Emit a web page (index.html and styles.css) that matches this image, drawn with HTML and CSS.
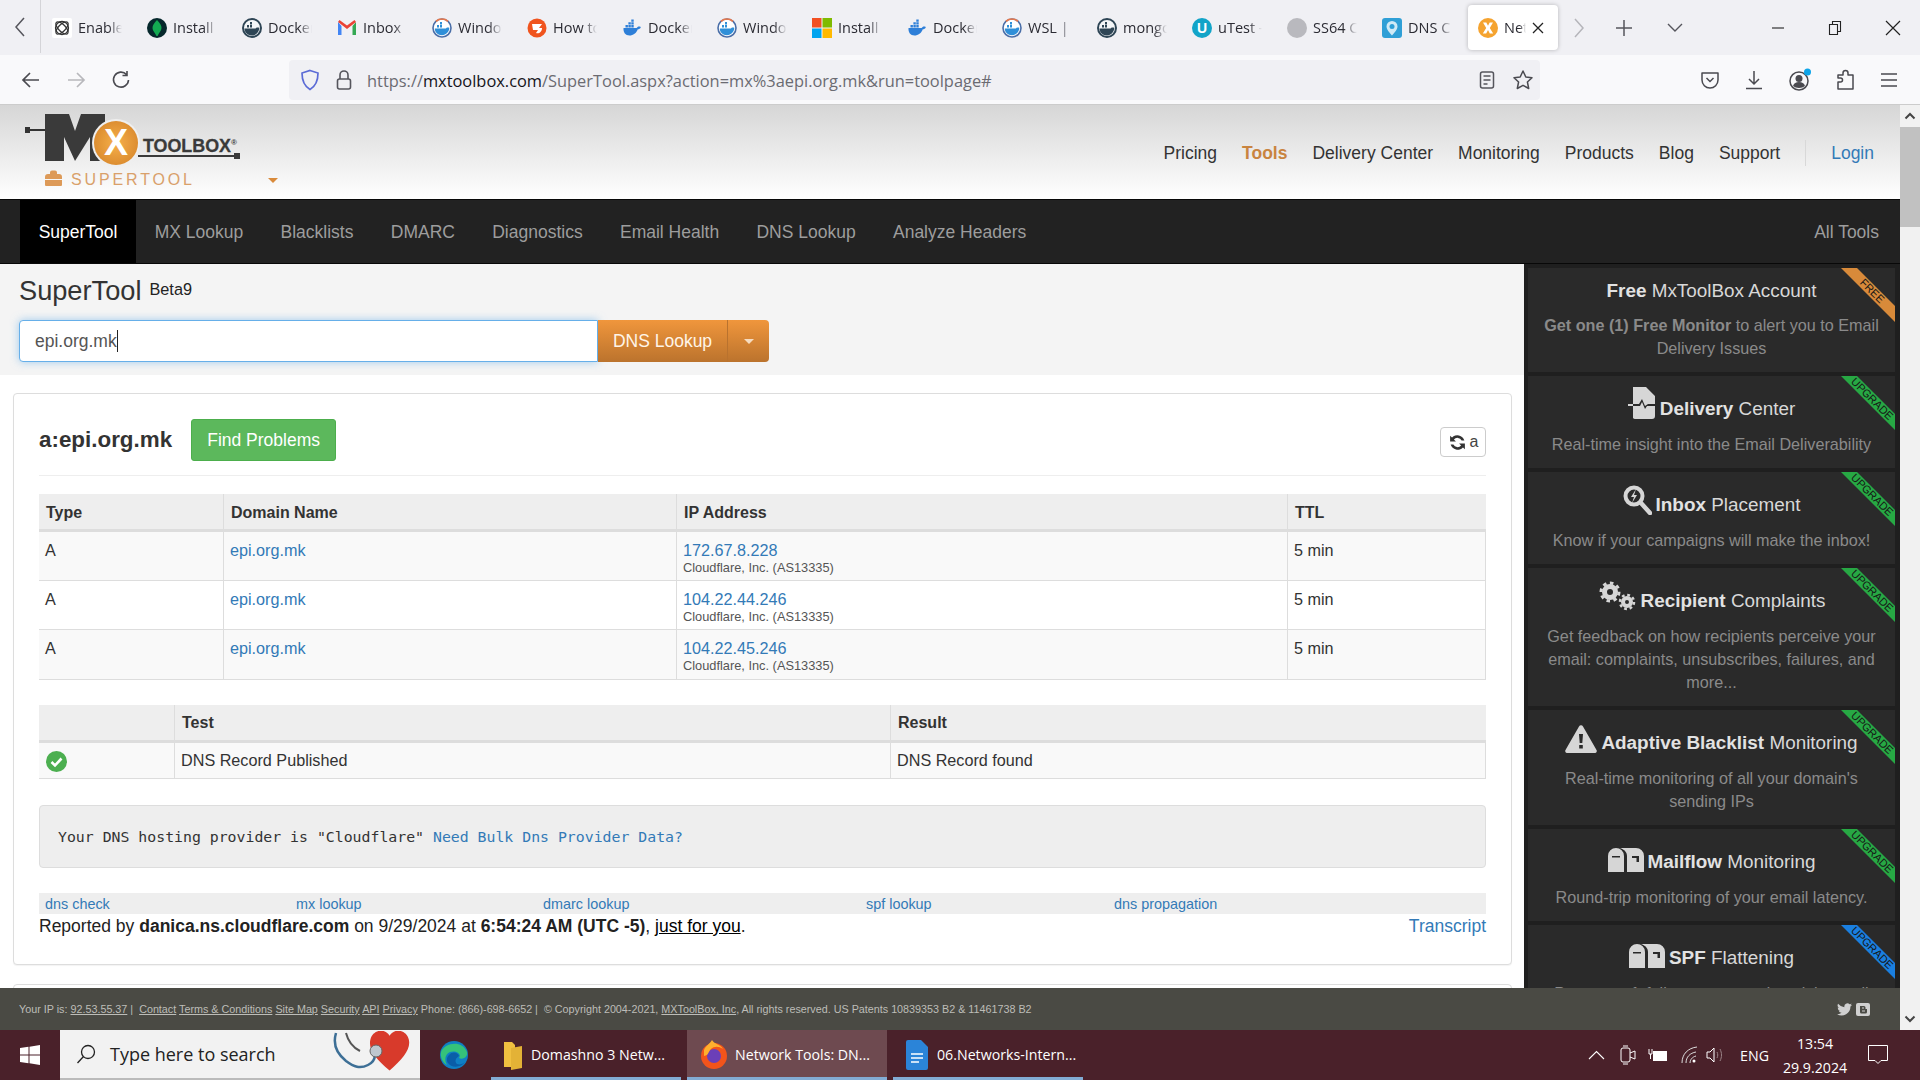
FILE: index.html
```html
<!DOCTYPE html>
<html lang="en">
<head>
<meta charset="utf-8">
<title>Network Tools: DNS Lookup</title>
<link rel="stylesheet" href="styles.css">
</head>
<body>
<svg class="defs" width="0" height="0" aria-hidden="true">
  <symbol id="whale" viewBox="0 0 20 20">
    <path fill="currentColor" d="M1.500 10h13.200c.5-1.200 1.800-1.800 3.300-1.400.4.200.3.500.8.600-.5 1.500-1.800 2-3 2-1.200 3.800-4.800 6.300-8.300 6.300-4 0-6.400-3-6-7.500z"/>
    <path fill="currentColor" d="M3.500 7h2.400v2.400H3.500zM6.400 7h2.400v2.400H6.400zM9.300 7h2.400v2.400H9.300zM6.400 4.200h2.400v2.400H6.400zM9.300 4.200h2.400v2.400H9.300zM9.300 1.400h2.400v2.400H9.300z"/>
  </symbol>
  <symbol id="dockring" viewBox="0 0 20 20">
    <circle cx="10" cy="10" r="9" fill="#f4f6f8" stroke="#2e4555" stroke-width="2"/>
    <path fill="#2e4555" d="M2.500 10.500h11c.6-1 2-1.500 3.800-.7 0 3.700-3 7.700-7.300 7.700-4.300 0-7.500-3.200-7.500-7z"/>
    <path fill="#2e4555" d="M5 7h2v2.500H5zM8 7h2v2.500H8zM8 4h2v2.500H8z"/>
  </symbol>
  <symbol id="winring" viewBox="0 0 20 20">
    <circle cx="10" cy="10" r="9" fill="#fff" stroke="#4a6ea8" stroke-width="1.600"/>
    <path fill="none" stroke="#e8774a" stroke-width="1.600" d="M4 3.300A9 9 0 0 1 16 3.300"/>
    <path fill="#2f8fd8" d="M2.800 10.500h11c.6-1 2-1.500 3.500-.7 0 3.700-3 7.400-7.300 7.400-4.300 0-7.200-2.900-7.200-6.700z"/>
    <path fill="#2f8fd8" d="M5 7h2v2.500H5zM8 7h2v2.500H8zM8 4h2v2.500H8z"/>
  </symbol>
  <symbol id="mailbox" viewBox="0 0 36 24">
    <path fill="#d6d6d6" d="M0 24V8a8 8 0 0 1 16 0v16zM12 0h16a8 8 0 0 1 8 8v16H19V8c0-3-1.500-6-7-8z"/>
    <path fill="#2a2a2a" d="M4 8h8v1.500H4zM24 8h7v6h-2.500V10H24z"/>
  </symbol>
</svg>

<div class="app">
  <div class="tabstrip">
    <div class="tab-back"><svg width="12" height="22" viewBox="0 0 12 22"><path d="M10 2 2 11l8 9" fill="none" stroke="#55555c" stroke-width="1.500"/></svg></div>
    <div class="tab"><svg class="fav" viewBox="0 0 20 20"><rect width="20" height="20" rx="2" fill="#fff"/><g fill="none" stroke="#333" stroke-width="1.300"><circle cx="10" cy="10" r="6.500"/><ellipse cx="10" cy="10" rx="8" ry="3.500" transform="rotate(45 10 10)"/><ellipse cx="10" cy="10" rx="8" ry="3.500" transform="rotate(-45 10 10)"/></g></svg><span class="tab-text">Enable</span></div>
    <div class="tab"><svg class="fav" viewBox="0 0 20 20"><circle cx="10" cy="10" r="10" fill="#06282c"/><path d="M10 2c3 3 4.500 5.500 4.500 8S12 15 10.500 18h-1C8 15 5.500 12.500 5.500 10S7 5 10 2z" fill="#13aa52"/></svg><span class="tab-text">Install</span></div>
    <div class="tab"><svg class="fav"><use href="#dockring"/></svg><span class="tab-text">Docker</span></div>
    <div class="tab"><svg class="fav" viewBox="0 0 20 20"><path d="M1 4v13h3.500V8z" fill="#4285f4"/><path d="M15.500 8v9H19V4z" fill="#34a853"/><path d="M1 4l9 7 9-7-1.500-2L10 7.500 2.500 2z" fill="#ea4335"/></svg><span class="tab-text">Inbox</span></div>
    <div class="tab"><svg class="fav"><use href="#winring"/></svg><span class="tab-text">Windows</span></div>
    <div class="tab"><svg class="fav" viewBox="0 0 20 20"><circle cx="10" cy="10" r="9.500" fill="#f0541e"/><path d="M5 6h10l-3 4h3c0 4-3 6-6 5l2-3H6z" fill="#fff"/></svg><span class="tab-text">How to</span></div>
    <div class="tab"><svg class="fav blue"><use href="#whale"/></svg><span class="tab-text">Docker</span></div>
    <div class="tab"><svg class="fav"><use href="#winring"/></svg><span class="tab-text">Windows</span></div>
    <div class="tab"><svg class="fav" viewBox="0 0 20 20"><rect width="9.500" height="9.500" fill="#f25022"/><rect x="10.500" width="9.500" height="9.500" fill="#7fba00"/><rect y="10.500" width="9.500" height="9.500" fill="#00a4ef"/><rect x="10.500" y="10.500" width="9.500" height="9.500" fill="#ffb900"/></svg><span class="tab-text">Install</span></div>
    <div class="tab"><svg class="fav blue"><use href="#whale"/></svg><span class="tab-text">Docker</span></div>
    <div class="tab"><svg class="fav"><use href="#winring"/></svg><span class="tab-text">WSL |</span></div>
    <div class="tab"><svg class="fav"><use href="#dockring"/></svg><span class="tab-text">mongo</span></div>
    <div class="tab"><svg class="fav" viewBox="0 0 20 20"><circle cx="10" cy="10" r="10" fill="#12a4c8"/><text x="10" y="15" text-anchor="middle" font-size="14" font-weight="700" font-family="Liberation Sans" fill="#fff">U</text></svg><span class="tab-text">uTest -</span></div>
    <div class="tab"><svg class="fav" viewBox="0 0 20 20"><circle cx="10" cy="10" r="10" fill="#b9b9be"/></svg><span class="tab-text">SS64 C</span></div>
    <div class="tab"><svg class="fav" viewBox="0 0 20 20"><rect width="20" height="20" rx="3" fill="#2f9fd6"/><path d="M10 3a5.500 5.500 0 0 1 5.500 5.500C15.500 12 10 17.500 10 17.500S4.500 12 4.500 8.500A5.500 5.500 0 0 1 10 3z" fill="#cfeaf6"/><circle cx="10" cy="8.500" r="2.500" fill="#2f9fd6"/></svg><span class="tab-text">DNS C</span></div>
    <div class="tab tab-active"><svg class="fav" viewBox="0 0 20 20"><circle cx="10" cy="10" r="10" fill="#f5a32f"/><path d="M5 4.500h3.300L10 7.800l1.700-3.300H15L11.800 10l3.400 5.500h-3.400L10 12.100l-1.800 3.400H4.800L8.200 10z" fill="#fff"/></svg><span class="tab-text tab-text-short">Network</span><svg class="tab-close" width="12" height="12" viewBox="0 0 12 12"><path d="M1 1l10 10M11 1 1 11" stroke="#222" stroke-width="1.300"/></svg></div>
    <div class="tab-next"><svg width="12" height="22" viewBox="0 0 12 22"><path d="M2 2l8 9-8 9" fill="none" stroke="#b5b5ba" stroke-width="1.500"/></svg></div>
    <div class="tab-plus"><svg width="18" height="18" viewBox="0 0 18 18"><path d="M9 1v16M1 9h16" stroke="#55555c" stroke-width="1.500"/></svg></div>
    <div class="tab-list"><svg width="16" height="10" viewBox="0 0 16 10"><path d="M1 1l7 7 7-7" fill="none" stroke="#55555c" stroke-width="1.400"/></svg></div>
    <div class="win-controls">
      <svg width="14" height="14" viewBox="0 0 14 14"><path d="M1 7h12" stroke="#222" stroke-width="1.100"/></svg>
      <svg width="14" height="16" viewBox="0 0 14 16"><path d="M1.500 4.500h8v10h-8zM4.500 4.500V1.500h8v10h-3" fill="none" stroke="#222" stroke-width="1.100"/></svg>
      <svg width="16" height="16" viewBox="0 0 16 16"><path d="M1 1l14 14M15 1 1 15" stroke="#222" stroke-width="1.200"/></svg>
    </div>
  </div>

  <div class="toolbar">
    <button class="tb-btn tb-first"><svg width="20" height="18" viewBox="0 0 20 18"><path d="M18 9H3M9 2 2 9l7 7" fill="none" stroke="#4a4a50" stroke-width="1.700"/></svg></button>
    <button class="tb-btn"><svg width="20" height="18" viewBox="0 0 20 18"><path d="M2 9h15M11 2l7 7-7 7" fill="none" stroke="#b8b8bc" stroke-width="1.700"/></svg></button>
    <button class="tb-btn"><svg width="20" height="20" viewBox="0 0 20 20"><path d="M15.500 4.500A7.500 7.500 0 1 0 17.500 10M16 1v4.500h-4.500" fill="none" stroke="#4a4a50" stroke-width="1.600"/></svg></button>
    <div class="urlbar">
      <svg class="url-shield" width="20" height="22" viewBox="0 0 20 22"><path d="M10 1.500 18 4c0 8-2 13-8 16.500C4 17 2 12 2 4z" fill="none" stroke="#5b6bd6" stroke-width="1.700"/></svg>
      <svg class="url-lock" width="18" height="22" viewBox="0 0 18 22"><path d="M5 10V6a4 4 0 0 1 8 0v4" fill="none" stroke="#55555c" stroke-width="1.600"/><rect x="2.500" y="10" width="13" height="10" rx="2" fill="none" stroke="#55555c" stroke-width="1.600"/></svg>
      <span class="url-text">https://<span class="url-host">mxtoolbox.com</span>/SuperTool.aspx?action=mx%3aepi.org.mk&amp;run=toolpage#</span>
      <svg class="url-reader" width="16" height="18" viewBox="0 0 16 18"><rect x="1.500" y="1" width="13" height="16" rx="2" fill="none" stroke="#55555c" stroke-width="1.500"/><path d="M4.500 5h7M4.500 9h7M4.500 13h4" stroke="#55555c" stroke-width="1.500"/></svg>
      <svg class="url-star" width="22" height="22" viewBox="0 0 22 22"><path d="m11 2 2.800 6 6.200.7-4.600 4.300 1.300 6.500L11 16.300 5.300 19.500 6.600 13 2 8.700 8.200 8z" fill="none" stroke="#4a4a50" stroke-width="1.500" stroke-linejoin="round"/></svg>
    </div>
    <div class="tb-right">
      <svg width="20" height="20" viewBox="0 0 20 20"><path d="M2 3h16v7a8 8 0 0 1-16 0z" fill="none" stroke="#4a4a50" stroke-width="1.500" stroke-linejoin="round"/><path d="m6.500 8 3.500 3.500L13.500 8" fill="none" stroke="#4a4a50" stroke-width="1.500"/></svg>
      <svg width="20" height="20" viewBox="0 0 20 20"><path d="M10 1v13M5 9l5 5 5-5M2 18.500h16" fill="none" stroke="#4a4a50" stroke-width="1.500"/></svg>
      <svg width="24" height="24" viewBox="0 0 24 24"><circle cx="11" cy="13" r="9" fill="none" stroke="#4a4a50" stroke-width="1.500"/><circle cx="11" cy="10.500" r="3.500" fill="#4a4a50"/><path d="M5 18c1-3 3-4 6-4s5 1 6 4c-3 2.500-9 2.500-12 0z" fill="#4a4a50"/><circle cx="19.500" cy="4" r="3.500" fill="#0ea5e9"/></svg>
      <svg width="20" height="22" viewBox="0 0 20 22"><path d="M2 20v-7h2.500a2 2 0 0 0 0-4H2V6h5V4a2.500 2.500 0 0 1 5 0v2h5v14z" fill="none" stroke="#4a4a50" stroke-width="1.500" stroke-linejoin="round"/></svg>
      <svg width="18" height="16" viewBox="0 0 18 16"><path d="M1 2h16M1 8h16M1 14h16" stroke="#4a4a50" stroke-width="1.500"/></svg>
    </div>
  </div>

  <div class="viewport">
    <div class="page">
      <header class="site-header">
        <svg class="logo" width="270" height="94" viewBox="0 0 270 94">
          <defs><radialGradient id="orb" cx="50%" cy="50%" r="55%"><stop offset="0" stop-color="#f6b04a"/><stop offset="1" stop-color="#da8a2e"/></radialGradient></defs>
          <rect x="5" y="22" width="5" height="6" fill="#333"/><rect x="10" y="24" width="16" height="2" fill="#333"/>
          <polygon points="25,9 49,9 55,26 61,9 85,9 85,56 70,56 70,32 55,56 44,32 44,56 25,56" fill="#3a3a3a"/>
          <circle cx="96" cy="38" r="24" fill="#efefef"/><circle cx="96" cy="38" r="22" fill="url(#orb)"/>
          <text x="96" y="50" text-anchor="middle" font-family="Liberation Sans" font-weight="700" font-size="36" fill="#fff">X</text>
          <text x="123" y="47" font-family="Liberation Sans" font-weight="700" font-size="18" stroke="#3a3a3a" stroke-width=".3" fill="#3a3a3a" textLength="88" lengthAdjust="spacingAndGlyphs">TOOLBOX</text>
          <text x="211" y="40" font-family="Liberation Sans" font-weight="700" font-size="8" fill="#3a3a3a">®</text>
          <rect x="118" y="50" width="97" height="2" fill="#3a3a3a"/><rect x="214" y="48" width="6" height="6" fill="#3a3a3a"/>
          <path d="M25 72a3 3 0 0 1 3-3h2v-1.500a2 2 0 0 1 2-2h3a2 2 0 0 1 2 2V69h2a3 3 0 0 1 3 3v2H25zM25 75h17v5a1 1 0 0 1-1 1H26a1 1 0 0 1-1-1z" fill="#dd9a58"/>
          <text x="51" y="80" font-family="Liberation Sans" font-size="16" fill="#d9a06a" textLength="121">SUPERTOOL</text>
          <path d="M248 73h10l-5 5z" fill="#d98a3a"/>
        </svg>
        <nav class="top-nav">
          <a>Pricing</a><a class="nav-current">Tools</a><a>Delivery Center</a><a>Monitoring</a><a>Products</a><a>Blog</a><a>Support</a>
          <span class="nav-sep"></span>
          <a class="nav-login">Login</a>
        </nav>
      </header>

      <nav class="tool-nav">
        <a class="tool-active">SuperTool</a><a>MX Lookup</a><a>Blacklists</a><a>DMARC</a><a>Diagnostics</a><a>Email Health</a><a>DNS Lookup</a><a>Analyze Headers</a>
        <a class="tool-all">All Tools</a>
      </nav>

      <div class="main">
        <div class="content">
          <section class="search-area">
            <div class="search-title"><h1>SuperTool</h1><span class="beta">Beta9</span></div>
            <div class="search-row">
              <div class="search-input">epi.org.mk<span class="caret-line"></span></div>
              <div class="search-btn"><span class="search-btn-label">DNS Lookup</span><span class="search-btn-drop"><i class="tri"></i></span></div>
            </div>
          </section>

          <section class="panel">
            <div class="panel-head">
              <h2>a:epi.org.mk</h2>
              <a class="btn-green">Find Problems</a>
              <a class="btn-refresh"><svg width="19" height="19" viewBox="0 0 18 18"><path d="M15.500 7A7 7 0 0 0 3.800 4.300L2 2.500V8h5.500L5.600 6.100A4.500 4.500 0 0 1 12.900 7zM2.500 11a7 7 0 0 0 11.700 2.700l1.800 1.800V10h-5.500l1.900 1.900A4.500 4.500 0 0 1 5.100 11z" fill="#333"/></svg><span>a</span></a>
            </div>

            <table class="grid grid-records">
              <colgroup><col class="c1"><col class="c2"><col class="c3"><col class="c4"></colgroup>
              <thead><tr><th>Type</th><th>Domain Name</th><th>IP Address</th><th>TTL</th></tr></thead>
              <tbody>
                <tr><td>A</td><td><a>epi.org.mk</a></td><td><a>172.67.8.228</a><small>Cloudflare, Inc. (AS13335)</small></td><td>5 min</td></tr>
                <tr><td>A</td><td><a>epi.org.mk</a></td><td><a>104.22.44.246</a><small>Cloudflare, Inc. (AS13335)</small></td><td>5 min</td></tr>
                <tr><td>A</td><td><a>epi.org.mk</a></td><td><a>104.22.45.246</a><small>Cloudflare, Inc. (AS13335)</small></td><td>5 min</td></tr>
              </tbody>
            </table>

            <table class="grid grid-tests">
              <colgroup><col class="t1"><col class="t2"><col class="t3"></colgroup>
              <thead><tr><th></th><th>Test</th><th>Result</th></tr></thead>
              <tbody>
                <tr><td class="ok-cell"><svg width="21" height="21" viewBox="0 0 21 21"><circle cx="10.500" cy="10.500" r="10.500" fill="#4caf50"/><path d="m5.500 11 3.500 3.500 6.500-7" fill="none" stroke="#fff" stroke-width="2.600"/></svg></td><td>DNS Record Published</td><td>DNS Record found</td></tr>
              </tbody>
            </table>

            <pre class="provider">Your DNS hosting provider is "Cloudflare" <a>Need Bulk Dns Provider Data?</a></pre>

            <div class="related">
              <a class="r1">dns check</a><a class="r2">mx lookup</a><a class="r3">dmarc lookup</a><a class="r4">spf lookup</a><a>dns propagation</a>
            </div>
            <div class="reported">
              <span>Reported by <b>danica.ns.cloudflare.com</b> on 9/29/2024 at <b>6:54:24 AM (UTC -5)</b>, <u>just for you</u>.</span>
              <a>Transcript</a>
            </div>
          </section>
          <section class="panel-next"></section>
        </div>

        <aside class="sidebar">
          <div class="card">
            <svg class="ribbon" viewBox="0 0 54 54"><polygon points="0,0 16,0 54,38 54,54" fill="#d88a3a"/><text x="28.500" y="25.500" transform="rotate(45 28.500 25.500)" text-anchor="middle" class="ribbon-text">FREE</text></svg>
            <div class="card-head"><span><b>Free</b> MxToolBox Account</span></div>
            <p><b>Get one (1) Free Monitor</b> to alert you to Email Delivery Issues</p>
          </div>
          <div class="card">
            <svg class="ribbon" viewBox="0 0 54 54"><polygon points="0,0 16,0 54,38 54,54" fill="#27a844"/><text x="28.500" y="25.500" transform="rotate(45 28.500 25.500)" text-anchor="middle" class="ribbon-text">UPGRADE</text></svg>
            <div class="card-head tall"><svg class="card-icon" width="28" height="32" viewBox="0 0 28 32"><path d="M5 0h13l9 9v20a3 3 0 0 1-3 3H7a3 3 0 0 1-2-1V19h7l2-4 3 7 2-3h8v-2h-7l-3 2-3-7-3 5H5z" fill="#d6d6d6"/><path d="M0 17h5v2H0z" fill="#d6d6d6"/></svg><span><b>Delivery</b> Center</span></div>
            <p>Real-time insight into the Email Deliverability</p>
          </div>
          <div class="card">
            <svg class="ribbon" viewBox="0 0 54 54"><polygon points="0,0 16,0 54,38 54,54" fill="#27a844"/><text x="28.500" y="25.500" transform="rotate(45 28.500 25.500)" text-anchor="middle" class="ribbon-text">UPGRADE</text></svg>
            <div class="card-head tall"><svg class="card-icon" width="29" height="30" viewBox="0 0 29 30"><circle cx="11" cy="11" r="8.500" fill="none" stroke="#d6d6d6" stroke-width="4"/><path d="m18 18 9 10" stroke="#d6d6d6" stroke-width="4.500" stroke-linecap="round"/><path d="m13 4-5 8h3l-2 6 5-8h-3z" fill="#d6d6d6"/></svg><span><b>Inbox</b> Placement</span></div>
            <p>Know if your campaigns will make the inbox!</p>
          </div>
          <div class="card">
            <svg class="ribbon" viewBox="0 0 54 54"><polygon points="0,0 16,0 54,38 54,54" fill="#27a844"/><text x="28.500" y="25.500" transform="rotate(45 28.500 25.500)" text-anchor="middle" class="ribbon-text">UPGRADE</text></svg>
            <div class="card-head tall"><svg class="card-icon" width="39" height="30" viewBox="0 0 39 30"><g fill="none" stroke="#d6d6d6"><circle cx="12" cy="11" r="5.500" stroke-width="5"/><circle cx="12" cy="11" r="9" stroke-width="3" stroke-dasharray="3.500 3.500"/><circle cx="29" cy="21" r="4" stroke-width="4"/><circle cx="29" cy="21" r="7" stroke-width="2.500" stroke-dasharray="2.800 2.700"/></g></svg><span><b>Recipient</b> Complaints</span></div>
            <p>Get feedback on how recipients perceive your email: complaints, unsubscribes, failures, and more...</p>
          </div>
          <div class="card">
            <svg class="ribbon" viewBox="0 0 54 54"><polygon points="0,0 16,0 54,38 54,54" fill="#27a844"/><text x="28.500" y="25.500" transform="rotate(45 28.500 25.500)" text-anchor="middle" class="ribbon-text">UPGRADE</text></svg>
            <div class="card-head tall"><svg class="card-icon" width="32" height="28" viewBox="0 0 32 28"><path d="M14 1.500a2.300 2.300 0 0 1 4 0l13.500 23.500a2 2 0 0 1-2 3H2.500a2 2 0 0 1-2-3z" fill="#d6d6d6"/><path d="M14 9h4l-.7 9h-2.600zM14.200 20h3.600v3.600h-3.600z" fill="#2a2a2a"/></svg><span><b>Adaptive Blacklist</b> Monitoring</span></div>
            <p>Real-time monitoring of all your domain's sending IPs</p>
          </div>
          <div class="card">
            <svg class="ribbon" viewBox="0 0 54 54"><polygon points="0,0 16,0 54,38 54,54" fill="#27a844"/><text x="28.500" y="25.500" transform="rotate(45 28.500 25.500)" text-anchor="middle" class="ribbon-text">UPGRADE</text></svg>
            <div class="card-head tall"><svg class="card-icon" width="36" height="24"><use href="#mailbox"/></svg><span><b>Mailflow</b> Monitoring</span></div>
            <p>Round-trip monitoring of your email latency.</p>
          </div>
          <div class="card">
            <svg class="ribbon" viewBox="0 0 54 54"><polygon points="0,0 16,0 54,38 54,54" fill="#1a7fe0"/><text x="28.500" y="25.500" transform="rotate(45 28.500 25.500)" text-anchor="middle" class="ribbon-text">UPGRADE</text></svg>
            <div class="card-head tall"><svg class="card-icon" width="36" height="24"><use href="#mailbox"/></svg><span><b>SPF</b> Flattening</span></div>
            <p>Prevent soft-failures on your domain's email</p>
          </div>
        </aside>
      </div>

      <footer class="site-footer">
        <span>Your IP is: <u>92.53.55.37</u> | &nbsp;<u>Contact</u> <u>Terms &amp; Conditions</u> <u>Site Map</u> <u>Security</u> <u>API</u> <u>Privacy</u> Phone: (866)-698-6652 | &nbsp;© Copyright 2004-2021, <u>MXToolBox, Inc</u>, All rights reserved. US Patents 10839353 B2 &amp; 11461738 B2</span>
        <span class="social">
          <svg width="15" height="13" viewBox="0 0 24 20"><path d="M24 2.400a10 10 0 0 1-2.800.8A5 5 0 0 0 23.300.5a10 10 0 0 1-3.100 1.200A5 5 0 0 0 11.800 6.200 14 14 0 0 1 1.700.9a5 5 0 0 0 1.500 6.600A5 5 0 0 1 1 6.900a5 5 0 0 0 3.900 4.900 5 5 0 0 1-2.200.1 5 5 0 0 0 4.600 3.400A10 10 0 0 1 0 17.400 14 14 0 0 0 21.500 5a10 10 0 0 0 2.500-2.600z" fill="#d0d0d0"/></svg>
          <svg width="14" height="13" viewBox="0 0 14 13"><rect width="14" height="13" rx="2" fill="#d0d0d0"/><path d="M4 3h4a1.500 1.500 0 0 1 1.500 1.500V6H11v3a1.500 1.500 0 0 1-1.500 1.500H5.500A1.500 1.500 0 0 1 4 9z" fill="#4a4a44"/><path d="M6 5h2M6 8h3" stroke="#d0d0d0"/></svg>
        </span>
      </footer>
    </div>
    <div class="scrollbar">
      <div class="sb-btn"><svg width="12" height="8" viewBox="0 0 12 8"><path d="M1.500 6.500 6 2l4.500 4.500" fill="none" stroke="#444" stroke-width="2"/></svg></div>
      <div class="sb-thumb"></div>
      <div class="sb-track"></div>
      <div class="sb-btn"><svg width="12" height="8" viewBox="0 0 12 8"><path d="M1.500 1.500 6 6l4.500-4.500" fill="none" stroke="#444" stroke-width="2"/></svg></div>
    </div>
  </div>

  <div class="taskbar">
    <div class="start"><svg width="20" height="20" viewBox="0 0 20 20"><path d="M0 3l8.500-1.200v7.700H0zM9.500 1.700 20 0v9.500H9.500zM0 10.500h8.500v7.700L0 17zM9.500 10.500H20V20L9.500 18.300z" fill="#fff"/></svg></div>
    <div class="task-search">
      <svg width="20" height="20" viewBox="0 0 20 20"><circle cx="12" cy="8" r="6.500" fill="none" stroke="#222" stroke-width="1.300"/><path d="M7.500 12.500 1.500 19" stroke="#222" stroke-width="1.300"/></svg>
      <span>Type here to search</span>
      <svg class="doodle" width="78" height="46" viewBox="0 0 78 46"><path d="M4 2c-3 10 0 20 10 28 8 6 14 8 22 4 6-3 8-8 6-14" fill="none" stroke="#3d6f96" stroke-width="2.500"/><path d="M14 2c2 8 6 14 14 18" fill="none" stroke="#555" stroke-width="2"/><path transform="translate(-12 -6) scale(1.200)" d="M58 38C46 28 40 20 42 12c2-8 12-10 16-3 4-7 14-5 16 3 2 8-5 16-16 26z" fill="#d83a2b"/><circle cx="44" cy="20" r="6" fill="#bfc7cf" stroke="#666"/></svg>
    </div>
    <div class="task-edge"><svg width="30" height="30" viewBox="0 0 30 30"><circle cx="15" cy="15" r="14" fill="#0f7fc4"/><path d="M2 12C5 3 23-1 28 12c1 5-4 8-8 6 3-4-3-8-9-6-5 2-6 8-3 13C4 23 1 18 2 12z" fill="#35c27a"/><path d="M10 15c3-4 9-3 10 1-3 2-5 5-2 8 3 1 6 0 8-2-4 6-14 6-17 1-2-3-1-6 1-8z" fill="#0a5da8"/></svg></div>
    <div class="task-item"><svg width="18" height="30" viewBox="0 0 18 30"><path d="M0 2h8l3 3v22H0z" fill="#f0c040"/><path d="M7 8l11-2v22L7 30z" fill="#e3b236"/></svg><span>Domashno 3 Netw...</span></div>
    <div class="task-item task-current"><svg width="28" height="30" viewBox="0 0 28 30"><circle cx="14" cy="16" r="13" fill="#f2541b"/><circle cx="14" cy="16" r="7" fill="#6b3fb8"/><path d="M4 10C6 5 10 4 12 0c2 4 8 4 11 9-4-3-9-3-12 0-3 3-2 6-7 7z" fill="#ffb02e"/></svg><span>Network Tools: DN...</span></div>
    <div class="task-item"><svg width="22" height="30" viewBox="0 0 22 30"><path d="M2 0h13l7 7v21a2 2 0 0 1-2 2H2a2 2 0 0 1-2-2V2a2 2 0 0 1 2-2z" fill="#2b84d8"/><path d="M5 14h12M5 18h12M5 22h8" stroke="#fff" stroke-width="1.500"/></svg><span>06.Networks-Intern...</span></div>
    <div class="tray">
      <svg class="tray-chev" width="17" height="10" viewBox="0 0 17 10"><path d="m1 9 7.500-7.500L16 9" fill="none" stroke="#fff" stroke-width="1.100"/></svg>
      <svg width="16" height="20" viewBox="0 0 16 20"><rect x="1" y="3" width="9" height="14" rx="2" fill="none" stroke="#fff"/><path d="M10 8l5-2v8l-5-2M3 1h5M3 19h5" fill="none" stroke="#fff"/></svg>
      <svg width="20" height="16" viewBox="0 0 20 16"><rect x="5" y="4" width="14" height="10" fill="#fff"/><path d="M1 2v5h3V2M2.500 7v5" fill="none" stroke="#fff"/></svg>
      <svg width="18" height="18" viewBox="0 0 18 18"><g fill="none" stroke="#ddd"><path d="M2 17C2 8 8 2 17 1M6 17c0-6 4-10 10-11M10 17c0-3 2-6 6-7"/></g><circle cx="14" cy="15" r="1.500" fill="#fff"/></svg>
      <svg class="tray-vol" width="20" height="18" viewBox="0 0 20 18"><path d="M1 6h3l4-4v14l-4-4H1z" fill="none" stroke="#fff"/><path d="M11 6c1 2 1 4 0 6M14 3c2 4 2 8 0 12" fill="none" stroke="#9a8286"/></svg>
      <span class="tray-lang">ENG</span>
      <span class="tray-clock"><span>13:54</span><span>29.9.2024</span></span>
      <svg class="tray-note" width="20" height="20" viewBox="0 0 20 20"><path d="M.5.500h19v15H13l-3 3-3-3H.5z" fill="none" stroke="#fff"/></svg>
    </div>
  </div>
</div>
</body>
</html>
```

FILE: styles.css
```css
* { box-sizing: border-box; }
html, body { margin: 0; height: 100%; overflow: hidden; }
body { font-family: "Liberation Sans", Arial, sans-serif; font-size: 16px; color: #333; background: #fff; }
a { color: inherit; text-decoration: none; }
.defs { display: block; height: 0; }
.app { display: flex; flex-direction: column; height: 1080px; width: 1920px; }

/* Browser tab strip */
.tabstrip { height: 55px; flex: none; background: #f0f0f4; display: flex; align-items: center; font-family: "Open Sans", sans-serif; font-size: 14.500px; color: #2b2b33; }
.tab-back { width: 41px; height: 53px; margin-top: -2px; margin-right: 4px; display: flex; align-items: center; justify-content: center; border-right: 1px solid #d4d4d8; flex: none; }
.tab { width: 95px; height: 45px; flex: none; display: flex; align-items: center; padding-left: 7px; gap: 6px; }
.fav { width: 20px; height: 20px; flex: none; }
.fav.blue { color: #2e7fd8; }
.tab-text { width: 44px; overflow: hidden; white-space: nowrap; -webkit-mask-image: linear-gradient(90deg, #000 70%, transparent); mask-image: linear-gradient(90deg, #000 70%, transparent); }
.tab-active { width: 90px; padding-left: 10px; margin-left: -2px; background: #fff; border-radius: 4px; box-shadow: 0 0 4px rgba(0,0,0,.25); }
.tab-text-short { width: 22px; }
.tab-close { flex: none; }
.tab-next { width: 42px; display: flex; justify-content: center; }
.tab-plus { width: 48px; display: flex; justify-content: center; }
.tab-list { width: 52px; margin-left: 1px; display: flex; justify-content: center; }
.win-controls { display: flex; align-items: center; gap: 43px; margin-left: 70px; }

/* Browser toolbar */
.toolbar { height: 50px; flex: none; background: #f9f9fb; border-bottom: 1px solid #ccc; display: flex; align-items: center; }
.tb-btn { width: 45px; height: 30px; border: 0; background: none; padding: 0; display: flex; align-items: center; justify-content: center; flex: none; }
.tb-first { margin-left: 8px; }
.urlbar { width: 1251px; height: 40px; margin-left: 146px; background: #f0f0f4; border-radius: 4px; display: flex; align-items: center; padding: 0 6px 0 11px; font-family: "Open Sans", sans-serif; font-size: 16.400px; color: #6b6b72; flex: none; }
.url-lock { margin-left: 15px; flex: none; }
.url-text { margin-left: 14px; padding-top: 2px; white-space: nowrap; }
.url-host { color: #15141a; }
.url-reader { margin-left: auto; flex: none; }
.url-star { margin-left: 17px; flex: none; }
.tb-right { margin-left: 160px; display: flex; align-items: center; gap: 24px; }

/* Site page */
.viewport { flex: 1; display: flex; min-height: 0; }
.page { width: 1900px; flex: none; display: flex; flex-direction: column; }
.site-header { height: 94px; flex: none; background: linear-gradient(#d6d6d6, #fff); display: flex; align-items: flex-start; justify-content: space-between; padding-left: 20px; padding-right: 26px; }
.logo { flex: none; }
.top-nav { display: flex; align-items: center; gap: 25px; height: 96px; font-size: 17.500px; color: #333; }
.nav-current { color: #c9843f; font-weight: 700; }
.nav-sep { width: 1px; height: 26px; background: #d8d8d8; }
.nav-login { color: #337ab7; }

.tool-nav { height: 65px; flex: none; background: #222; border-top: 1px solid #080808; border-bottom: 1px solid #080808; display: flex; align-items: stretch; padding-left: 20px; padding-right: 21px; font-size: 17.500px; color: #9d9d9d; }
.tool-nav a { display: flex; align-items: center; padding: 1px 18.650px 0; }
.tool-nav .tool-active { background: #000; color: #fff; }
.tool-nav .tool-all { margin-left: auto; padding: 1px 0 0; }

.main { flex: 1; min-height: 0; display: flex; overflow: hidden; }
.content { width: 1524px; flex: none; overflow: hidden; }
.search-area { height: 111px; background: #f4f4f4; padding: 9px 19px 0; }
.search-title { display: flex; align-items: flex-start; gap: 8px; height: 46px; color: #333; }
.search-title h1 { margin: 0; font-weight: 400; font-size: 27.200px; line-height: 36px; }
.beta { font-size: 16.300px; line-height: 32px; color: #222; }
.search-row { display: flex; height: 42px; margin-top: 1px; font-size: 17.500px; }
.search-input { width: 579px; background: #fff; border: 1px solid #66afe9; border-radius: 4px 0 0 4px; box-shadow: 0 0 8px rgba(102,175,233,.6); padding-left: 15px; display: flex; align-items: center; color: #555; }
.caret-line { width: 1px; height: 22px; background: #222; }
.search-btn { display: flex; width: 171px; background: linear-gradient(#f0963c, #bb732d); border-radius: 0 4px 4px 0; color: #fff5e8; }
.search-btn-label { width: 130px; display: flex; align-items: center; justify-content: center; border-right: 1px solid #b9722e; }
.search-btn-drop { flex: 1; display: flex; align-items: center; justify-content: center; }
.tri { width: 0; height: 0; border-left: 5px solid transparent; border-right: 5px solid transparent; border-top: 5px solid #f6dcc0; }

.panel { margin: 18px 12px 0 13px; height: 572px; border: 1px solid #ddd; border-radius: 4px; padding: 0 25px; background: #fff; box-shadow: 0 1px 1px rgba(0,0,0,.05); }
.panel-next { margin: 19px 12px 0 13px; height: 40px; border: 1px solid #ddd; border-radius: 4px; }
.panel-head { height: 82px; padding-top: 25px; border-bottom: 1px solid #eee; display: flex; align-items: flex-start; }
.panel-head h2 { margin: 0; font-size: 22.400px; font-weight: 700; line-height: 41px; color: #333; }
.btn-green { margin-left: 19px; width: 145px; height: 42px; background: #5cb85c; border: 1px solid #4cae4c; border-radius: 3px; color: #fff; font-size: 17.500px; display: flex; align-items: center; justify-content: center; }
.btn-refresh { margin-left: auto; margin-top: 8px; width: 46px; height: 30px; background: #fff; border: 1px solid #ccc; border-radius: 4px; display: flex; align-items: center; justify-content: center; gap: 3px; font-size: 16px; color: #444; }

.grid { width: 1447px; border-collapse: separate; border-spacing: 0; table-layout: fixed; margin-top: 18px; font-size: 16.200px; }
.c1 { width: 184px; } .c2 { width: 453px; } .c3 { width: 611px; } .c4 { width: 199px; }
.t1 { width: 135px; } .t2 { width: 716px; } .t3 { width: 596px; }
.grid th { height: 38px; background: #eee; border-bottom: 3px solid #ddd; border-left: 1px solid #ddd; text-align: left; padding: 0 7px; font-weight: 700; font-size: 16px; color: #333; }
.grid-records th { padding-top: 2px; }
.grid th:first-child, .grid td:first-child { border-left: 0; }
.grid td { height: 49px; vertical-align: top; padding: 7px 6px 0; line-height: 22px; border-bottom: 1px solid #ddd; border-left: 1px solid #ddd; color: #333; }
.grid td:last-child { border-right: 1px solid #ddd; }
.grid tbody tr:nth-child(odd) td { background: #f9f9f9; }
.grid tbody tr:last-child td { height: 50px; }
.grid a { color: #337ab7; }
.grid small { display: block; font-size: 12.800px; line-height: 14px; color: #555; margin-top: 0; }
.grid-tests { margin-top: 25px; }
.grid-tests th { height: 38px; }
.grid-tests tbody tr:last-child td { height: 36px; padding-top: 6px; }
.grid-tests tbody tr:last-child .ok-cell { padding: 8px 0 0 7px; }
.ok-cell svg { display: block; }

.provider { margin: 26px 0 0; height: 63px; padding: 0 18px; background: #eee; border: 1px solid #ddd; border-radius: 4px; font-family: "DejaVu Sans Mono", monospace; font-size: 14.830px; line-height: 61px; color: #333; }
.provider a { color: #337ab7; }
.related { margin-top: 25px; height: 21px; background: #eee; padding-left: 6px; display: flex; align-items: center; font-size: 14.400px; color: #337ab7; }
.related a { flex: none; }
.r1 { width: 251px; } .r2 { width: 247px; } .r3 { width: 323px; } .r4 { width: 248px; }
.reported { height: 24px; display: flex; justify-content: space-between; align-items: center; font-size: 17.500px; color: #222; }
.reported a { color: #337ab7; }
.reported u { color: #000; }

/* Sidebar */
.sidebar { width: 376px; flex: none; background: #1f1f1f; padding: 4px 4px 0; display: flex; flex-direction: column; gap: 4px; overflow: hidden; }
.card { position: relative; width: 367px; flex: none; background: #2a2a2a; padding: 10px 15px 12px; text-align: center; }
.ribbon { position: absolute; top: 0; right: 0; width: 54px; height: 54px; }
.ribbon-text { font-family: "Liberation Sans", sans-serif; font-size: 11px; fill: #161616; }
.card-head { height: 26px; display: flex; align-items: flex-end; justify-content: center; gap: 4px; font-size: 18.900px; line-height: 26px; color: #d8d8d8; white-space: nowrap; }
.card-head.tall { height: 36px; }
.card-head b { color: #e2e2e2; }
.card-icon { flex: none; margin-bottom: 3px; }
.card p { margin: 10px 0 0; font-size: 16.200px; line-height: 23px; color: #8a8a8a; }
.card-head.tall + p { margin-top: 11px; }

.site-footer { height: 42px; flex: none; margin-top: auto; background: #4a4a44; color: #bdbdb8; display: flex; align-items: center; justify-content: space-between; padding: 0 30px 0 19px; font-size: 10.770px; white-space: nowrap; }
.social { display: flex; align-items: center; gap: 4px; }

.scrollbar { width: 20px; flex: none; background: #f1f1f1; display: flex; flex-direction: column; }
.sb-btn { height: 22px; display: flex; align-items: center; justify-content: center; flex: none; }
.sb-thumb { height: 100px; background: #c1c1c1; flex: none; }
.sb-track { flex: 1; }

/* Windows taskbar */
.taskbar { height: 50px; flex: none; background: #4a212a; display: flex; align-items: stretch; color: #fff; font-family: "Open Sans", sans-serif; font-size: 14.200px; }
.start { width: 60px; display: flex; align-items: center; justify-content: center; flex: none; }
.task-search { width: 360px; background: #f2f2f2; border-bottom: 2px solid #bbb; display: flex; align-items: center; padding-left: 16px; color: #222; font-size: 18px; flex: none; }
.task-search span { margin-left: 14px; }
.doodle { margin-left: 56px; }
.task-edge { width: 67px; display: flex; align-items: center; justify-content: center; flex: none; }
.task-item { width: 190px; margin-left: 4px; display: flex; align-items: center; gap: 9px; padding: 2px 0 0 13px; border-bottom: 3px solid #82acd4; white-space: nowrap; flex: none; }
.task-current { width: 200px; margin-left: 6px; margin-right: 2px; background: #6e4a50; gap: 7px; }
.tray { margin-left: auto; display: flex; align-items: center; gap: 12px; padding-right: 32px; }
.tray-chev { margin-right: 3px; }
.tray-vol { margin-left: -4px; margin-right: 2px; }
.tray-lang { margin-right: 2px; }
.tray-clock { display: flex; flex-direction: column; align-items: center; line-height: 24px; width: 64px; padding-top: 1px; }
.tray-note { margin-left: 9px; }
```
